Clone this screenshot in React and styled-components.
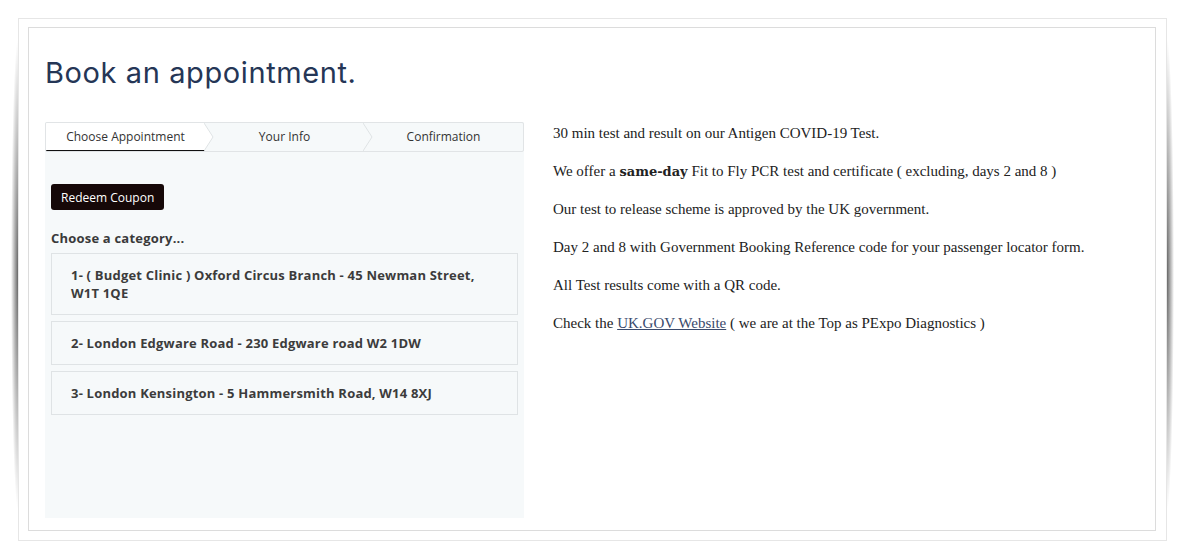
import React from 'react'
import styled, { createGlobalStyle } from 'styled-components'

const GlobalStyle = createGlobalStyle`
  html, body {
    margin: 0;
    padding: 0;
    background: #fff;
  }
  body {
    font-family: "Open Sans", "Liberation Sans", sans-serif;
  }
`

const Page = styled.div`
  padding: 18px;
  width: 1184px;
  height: 559px;
  box-sizing: border-box;
`

const Outer = styled.div`
  position: relative;
  height: 523px;
  width: 1149px;
  box-sizing: border-box;
  border: 1px solid #e6e6e6;
  background: #fff;
  padding: 8px 10px 9px 9px;
  &::before,
  &::after {
    content: '';
    position: absolute;
    top: 20px;
    bottom: 30px;
    width: 7px;
  }
  &::before {
    left: -8px;
    background: radial-gradient(ellipse 100% 50% at right center, rgba(0, 0, 0, 0.6), rgba(0, 0, 0, 0) 100%);
  }
  &::after {
    right: -8px;
    background: radial-gradient(ellipse 100% 50% at left center, rgba(0, 0, 0, 0.6), rgba(0, 0, 0, 0) 100%);
  }
`

const Inner = styled.div`
  height: 100%;
  box-sizing: border-box;
  border: 1px solid #dcdcdc;
  padding: 25px 16px 12px 16px;
  display: flex;
  flex-direction: column;
`

const Title = styled.h1`
  margin: 0 0 29px 0;
  font-family: Inter, "Noto Sans", sans-serif;
  font-weight: 400;
  font-size: 29px;
  line-height: 40px;
  letter-spacing: 0.6px;
  color: #253656;
`

const Columns = styled.div`
  display: flex;
  gap: 29px;
  flex: 1;
  min-height: 0;
`

const Wizard = styled.div`
  width: 479px;
  display: flex;
  flex-direction: column;
  background: #f6f9fa;
`

const Steps = styled.div`
  display: flex;
  height: 28px;
  border: 1px solid #e1e4e6;
  border-radius: 2px;
  background: #f6f9fa;
  overflow: hidden;
`

const Step = styled.div`
  position: relative;
  flex: 1;
  display: flex;
  align-items: center;
  justify-content: center;
  font-size: 12px;
  color: #333;
  background: ${p => (p.active ? '#fff' : 'transparent')};
  border-bottom: 2px solid ${p => (p.active ? '#111' : 'transparent')};
  margin-bottom: ${p => (p.active ? '-1px' : '0')};
  svg {
    position: absolute;
    right: -9px;
    top: 0;
    z-index: 1;
  }
`

const Body = styled.div`
  padding: 32px 6px 0 6px;
  display: flex;
  flex-direction: column;
`

const Coupon = styled.button`
  align-self: flex-start;
  height: 26px;
  padding: 0 10px;
  border: none;
  border-radius: 3px;
  background: #160808;
  color: #fff;
  font-family: "Open Sans", sans-serif;
  font-size: 12px;
  cursor: pointer;
`

const Label = styled.div`
  margin: 19px 0 6px;
  font-size: 13px;
  font-weight: 700;
  color: #3a3a3a;
  letter-spacing: 0.2px;
`

const Category = styled.div`
  border: 1px solid #dfe3e5;
  background: #f6f9fa;
  padding: 12px 20px 12px 19px;
  margin-bottom: 6px;
  font-size: 13px;
  font-weight: 700;
  line-height: 18px;
  color: #3c3c3c;
  letter-spacing: 0.2px;
`

const Info = styled.div`
  padding-top: 3px;
  font-family: "Liberation Serif", "Times New Roman", serif;
  font-size: 15px;
  color: #222;
  p {
    margin: 0 0 21px;
    line-height: 17px;
  }
  b {
    font-family: "DejaVu Serif", serif;
    font-size: 13px;
  }
  a {
    color: #3a4a6c;
    text-decoration: underline;
  }
`

const Chevron = () => (
  <svg width="10" height="28" viewBox="0 0 10 28">
    <path d="M0 0 L9 14 L0 28" fill="none" stroke="#dfe3e5" strokeWidth="1" />
  </svg>
)

const ActiveChevron = () => (
  <svg width="10" height="28" viewBox="0 0 10 28">
    <path d="M0 0 L9 14 L0 28 Z" fill="#fff" />
    <path d="M0 0 L9 14 L0 28" fill="none" stroke="#dfe3e5" strokeWidth="1" />
  </svg>
)

const categories = [
  '1- ( Budget Clinic ) Oxford Circus Branch - 45 Newman Street, W1T 1QE',
  '2- London Edgware Road - 230 Edgware road W2 1DW',
  '3- London Kensington - 5 Hammersmith Road, W14 8XJ',
]

export default function App() {
  return (
    <>
      <GlobalStyle />
      <Page>
        <Outer>
          <Inner>
            <Title>Book an appointment.</Title>
            <Columns>
              <Wizard>
                <Steps>
                  <Step active>
                    Choose Appointment
                    <ActiveChevron />
                  </Step>
                  <Step>
                    Your Info
                    <Chevron />
                  </Step>
                  <Step>Confirmation</Step>
                </Steps>
                <Body>
                  <Coupon>Redeem Coupon</Coupon>
                  <Label>Choose a category...</Label>
                  {categories.map(c => (
                    <Category key={c}>{c}</Category>
                  ))}
                </Body>
              </Wizard>
              <Info>
                <p>30 min test and result on our Antigen COVID-19 Test.</p>
                <p>
                  We offer a <b>same-day</b> Fit to Fly PCR test and certificate ( excluding, days 2 and 8 )
                </p>
                <p>Our test to release scheme is approved by the UK government.</p>
                <p>Day 2 and 8 with Government Booking Reference code for your passenger locator form.</p>
                <p>All Test results come with a QR code.</p>
                <p>
                  Check the <a href="#">UK.GOV Website</a> ( we are at the Top as PExpo Diagnostics )
                </p>
              </Info>
            </Columns>
          </Inner>
        </Outer>
      </Page>
    </>
  )
}
